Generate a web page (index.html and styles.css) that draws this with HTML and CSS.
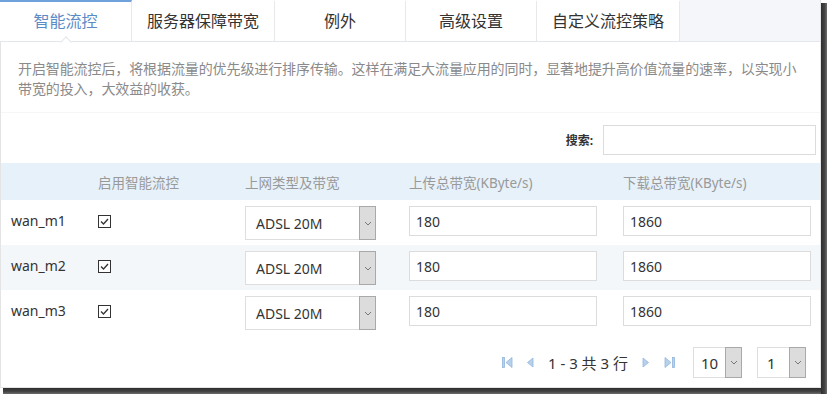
FILE: index.html
```html
<!DOCTYPE html>
<html lang="zh-CN">

<head>
    <meta charset="UTF-8">
    <meta name="viewport" content="width=device-width, initial-scale=1.0">
    <title>智能流控</title>
    <link rel="stylesheet" href="styles.css">
</head>

<body>
    <div class="shot">
    <div class="frame">
        <ul class="tabs">
            <li class="active">智能流控</li>
            <li class="wide">服务器保障带宽</li>
            <li>例外</li>
            <li>高级设置</li>
            <li class="wide">自定义流控策略</li>
        </ul>

        <p class="desc">开启智能流控后，将根据流量的优先级进行排序传输。这样在满足大流量应用的同时，显著地提升高价值流量的速率，以实现小<br>带宽的投入，大效益的收获。</p>

        <div class="search">
            <label for="kw">搜索:</label>
            <input id="kw" type="text">
        </div>

        <div class="list">
            <div class="row head">
                <div></div>
                <div>启用智能流控</div>
                <div>上网类型及带宽</div>
                <div>上传总带宽(KByte/s)</div>
                <div>下载总带宽(KByte/s)</div>
            </div>
            <div class="row">
                <div class="name">wan_m1</div>
                <div><svg class="check" width="13" height="13" viewBox="0 0 13 13"><rect x="0.5" y="0.5" width="12" height="12" fill="#fff" stroke="#333"/><path d="M3 6.5 L5.5 9 L10 4" fill="none" stroke="#333" stroke-width="1.3"/></svg></div>
                <div><div class="select"><span class="val">ADSL 20M</span><span class="arrow"><svg width="8" height="5" viewBox="0 0 8 5"><path d="M1 1 L4 4 L7 1" fill="none" stroke="#777"/></svg></span></div></div>
                <div><input class="num" type="text" value="180"></div>
                <div><input class="num" type="text" value="1860"></div>
            </div>
            <div class="row odd">
                <div class="name">wan_m2</div>
                <div><svg class="check" width="13" height="13" viewBox="0 0 13 13"><rect x="0.5" y="0.5" width="12" height="12" fill="#fff" stroke="#333"/><path d="M3 6.5 L5.5 9 L10 4" fill="none" stroke="#333" stroke-width="1.3"/></svg></div>
                <div><div class="select"><span class="val">ADSL 20M</span><span class="arrow"><svg width="8" height="5" viewBox="0 0 8 5"><path d="M1 1 L4 4 L7 1" fill="none" stroke="#777"/></svg></span></div></div>
                <div><input class="num" type="text" value="180"></div>
                <div><input class="num" type="text" value="1860"></div>
            </div>
            <div class="row">
                <div class="name">wan_m3</div>
                <div><svg class="check" width="13" height="13" viewBox="0 0 13 13"><rect x="0.5" y="0.5" width="12" height="12" fill="#fff" stroke="#333"/><path d="M3 6.5 L5.5 9 L10 4" fill="none" stroke="#333" stroke-width="1.3"/></svg></div>
                <div><div class="select"><span class="val">ADSL 20M</span><span class="arrow"><svg width="8" height="5" viewBox="0 0 8 5"><path d="M1 1 L4 4 L7 1" fill="none" stroke="#777"/></svg></span></div></div>
                <div><input class="num" type="text" value="180"></div>
                <div><input class="num" type="text" value="1860"></div>
            </div>
        </div>

        <div class="pager">
            <svg class="pg first" width="11" height="13" viewBox="0 0 11 13"><rect x="0.5" y="1.5" width="2" height="10"/><path d="M10 1.5 L4 6.5 L10 11.5 Z"/></svg>
            <svg class="pg prev" width="8" height="13" viewBox="0 0 8 13"><path d="M7 2 L1.5 6.5 L7 11 Z"/></svg>
            <span class="info">1 - 3 共 3 行</span>
            <svg class="pg next" width="8" height="13" viewBox="0 0 8 13"><path d="M1 2 L6.5 6.5 L1 11 Z"/></svg>
            <svg class="pg last" width="11" height="13" viewBox="0 0 11 13"><path d="M1 1.5 L7 6.5 L1 11.5 Z"/><rect x="8.5" y="1.5" width="2" height="10"/></svg>
            <div class="select small size"><span class="val">10</span><span class="arrow"><svg width="8" height="5" viewBox="0 0 8 5"><path d="M1 1 L4 4 L7 1" fill="none" stroke="#777"/></svg></span></div>
            <div class="select small"><span class="val">1</span><span class="arrow"><svg width="8" height="5" viewBox="0 0 8 5"><path d="M1 1 L4 4 L7 1" fill="none" stroke="#777"/></svg></span></div>
        </div>
    </div>
    </div>
</body>

</html>
```

FILE: styles.css
```css
* {
    margin: 0;
    padding: 0;
    box-sizing: border-box;
}

body {
    font-family: "Noto Sans", "Noto Sans CJK SC", sans-serif;
    color: #333;
    background: #fff;
}

/* 截图外的阴影 */
.shot {
    width: 827px;
    height: 394px;
    background:
        linear-gradient(to right, #2e2e2e, #444 60%, #6e6e6e) right 0 top 3px / 6px 100% no-repeat,
        linear-gradient(to bottom, #2e2e2e, #444 60%, #6e6e6e) left 3px bottom 0 / 100% 6px no-repeat,
        #fff;
}

.frame {
    width: 821px;
    height: 388px;
    border: 1px solid #e4e4e4;
    border-top: 0;
    background: #fff;
}

/* tabs */
.tabs {
    display: flex;
    height: 42px;
    list-style: none;
    background: #f4f6f9;
    border-bottom: 1px solid #e3e6ea;
    margin-left: -1px;
}

.tabs li {
    width: 131px;
    height: 41px;
    line-height: 38px;
    text-align: center;
    font-size: 16px;
    background: #fff;
    border-top: 2px solid transparent;
    border-right: 1px solid #e8e8e8;
}

.tabs li.wide {
    width: 143px;
}

.tabs li.active {
    width: 132px;
    color: #5b8bc6;
    border-top-color: #6fa2da;
    position: relative;
}

/* 小三角 */
.tabs li.active::after {
    content: "";
    position: absolute;
    left: 62px;
    top: 36px;
    width: 7px;
    height: 7px;
    background: #fff;
    border-left: 1px solid #e3e6ea;
    border-top: 1px solid #e3e6ea;
    transform: rotate(45deg);
}

/* description */
.desc {
    padding: 17px 10px 13px 17px;
    font-size: 14px;
    letter-spacing: -0.1px;
    line-height: 20px;
    color: #8a8a8a;
    border-bottom: 1px solid #f6f6f6;
    height: 71px;
    white-space: nowrap;
}

/* search */
.search {
    display: flex;
    justify-content: flex-end;
    align-items: center;
    height: 50px;
    padding: 3px 4px 0 0;
}

.search label {
    font-size: 12px;
    font-weight: bold;
    margin-right: 10px;
}

.search input {
    width: 213px;
    height: 30px;
    border: 1px solid #dcdcdc;
    outline: none;
}

/* list */
.row {
    display: grid;
    grid-template-columns: 88px 147px 164px 214px 1fr;
    align-items: center;
    height: 45px;
}

.row > div {
    padding-left: 9px;
}

.row > div.name {
    padding-left: 10px;
    font-size: 14px;
    padding-bottom: 5px;
}

.row.head {
    height: 37px;
    background: #e6f1fa;
    color: #999;
    font-size: 13.5px;
}

.row.odd {
    background: #f3f7fa;
}

.check {
    display: block;
    margin-top: -2px;
}

.select {
    display: flex;
    width: 131px;
    height: 34px;
    border: 1px solid #dedede;
    background: #fff;
    font-size: 14px;
    margin-top: 1px;
}

.select .val {
    flex: 1;
    padding-left: 10px;
    line-height: 33px;
}

.select .arrow {
    width: 17px;
    display: flex;
    align-items: center;
    justify-content: center;
    background: #dcdcdc;
    border: 1px solid #a9a9a9;
    margin: -1px -1px -1px 0;
}

.num {
    display: block;
    width: 188px;
    height: 30px;
    border: 1px solid #dcdcdc;
    padding: 0 6px;
    font-family: inherit;
    font-size: 14px;
    color: #333;
    outline: none;
    margin-top: -3px;
}

/* pager */
.pager {
    display: flex;
    justify-content: flex-end;
    align-items: center;
    height: 52px;
    padding: 2px 14px 0 0;
}

.pg {
    display: block;
    fill: #b7d1ec;
    stroke: #93b6dd;
    stroke-width: 0.8;
}

.pg.prev {
    margin-left: 13px;
}

.info {
    font-size: 15px;
    margin: 0 14px 0 14px;
}

.pg.last {
    margin-left: 14px;
}

.select.small {
    width: 49px;
    height: 31px;
    font-size: 15px;
}

.select.small .val {
    padding-left: 7px;
    line-height: 30px;
}

.select.small.size {
    margin-left: 18px;
    margin-right: 15px;
}

.select.small:last-child .val {
    padding-left: 9px;
}
```
